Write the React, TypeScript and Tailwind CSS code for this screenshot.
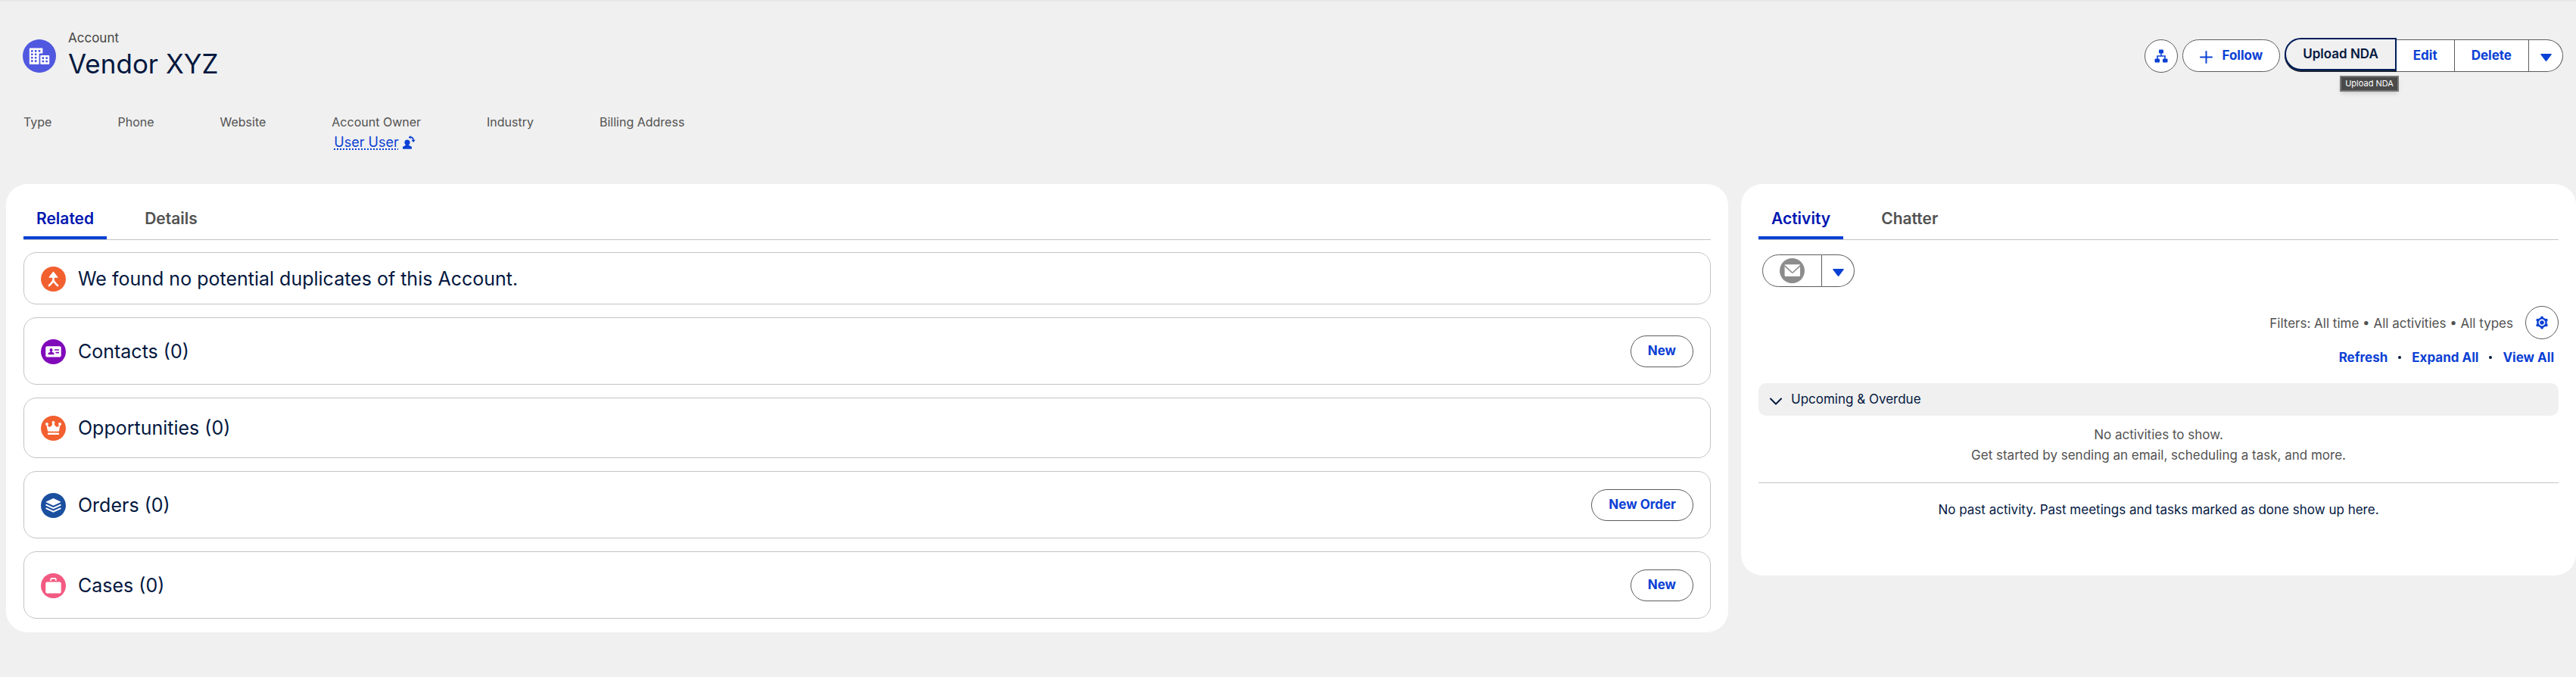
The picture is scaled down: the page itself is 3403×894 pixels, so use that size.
import { ReactNode } from 'react';

const FIELDS = ['Type', 'Phone', 'Website', 'Account Owner', 'Industry', 'Billing Address'];

export default function App() {
  return (
    <div className="min-h-screen bg-[#f0f0f0] font-['Inter',sans-serif] text-[17px] text-[#03183f]">
      <header className="border-t-2 border-[#e8e8e8] pt-9 pr-[17px] pb-[42px] pl-[30px]">
        <div className="flex items-start justify-between">
          <div className="flex items-start gap-4">
            <AccountIcon />
            <div>
              <p className="leading-6 text-[#444444]">Account</p>
              <h1 className="text-[35px] leading-[44px]">Vendor XYZ</h1>
            </div>
          </div>
          <Actions />
        </div>

        <dl className="mt-[45px] flex min-h-[50px] gap-[87px] pl-px">
          {FIELDS.map(field => (
            <div key={field}>
              <dt className="text-base leading-5 text-[#525252]">{field}</dt>
              {field === 'Account Owner' && (
                <dd className="mt-1 flex items-center gap-1 pl-[3px] text-lg leading-[26px]">
                  <a href="#owner" className="text-[#0b40d4] underline decoration-dotted decoration-2 underline-offset-2">User User</a>
                  <button aria-label="Change Owner" className="text-[#0b40d4]">
                    <ChangeOwnerIcon />
                  </button>
                </dd>
              )}
            </div>
          ))}
        </dl>
      </header>

      <main className="grid grid-cols-[2275fr_1103fr] items-start gap-[17px] pl-2">
        <section className="rounded-[28px] bg-white px-[23px] pb-[18px]">
          <Tabs tabs={['Related', 'Details']} />
          <div className="mt-4 flex flex-col gap-[17px]">
            <article className="flex items-center gap-4 rounded-[17px] border border-[#c4c4c4] px-[22px] pt-[18px] pb-4">
              <MergeIcon />
              <h2 className="text-[25px] leading-[33px]">We found no potential duplicates of this Account.</h2>
            </article>
            <RelatedList icon={<ContactIcon />} title="Contacts (0)" action="New" />
            <RelatedList icon={<OpportunityIcon />} title="Opportunities (0)" />
            <RelatedList icon={<OrderIcon />} title="Orders (0)" action="New Order" />
            <RelatedList icon={<CaseIcon />} title="Cases (0)" action="New" />
          </div>
        </section>

        <section className="rounded-[28px] bg-white px-[23px] pb-[73px]">
          <Tabs tabs={['Activity', 'Chatter']} />
          <Activity />
        </section>
      </main>
    </div>
  );
}

function Actions() {
  return (
    <div className="mt-3.5 flex items-start gap-1.5 font-bold text-[#0b40d4]">
      <button aria-label="View Account Hierarchy" className="flex size-11 items-center justify-center rounded-full border border-[#5c5c5c] bg-white">
        <HierarchyIcon />
      </button>
      <button className="flex h-[43px] items-center gap-3 rounded-full border border-[#5c5c5c] bg-white px-[22px]">
        <svg viewBox="0 0 17 17" className="mt-1 size-[17px]" fill="none" stroke="currentColor" strokeWidth="2" strokeLinecap="round">
          <path d="M8.5 1v15M1 8.5h15" />
        </svg>
        Follow
      </button>
      <div className="flex">
        <div className="relative">
          <button className="h-[43px] -translate-y-0.5 rounded-l-full border-2 border-[#001e5b] bg-[#f0f0f0] px-[22px] font-semibold text-[#03183f] shadow-[0_2px_0_#1c2433]">Upload NDA</button>
          <span role="tooltip" className="absolute top-12 left-[73px] border-2 border-[#777777] bg-[#4a4a4a] px-[5px] text-[11px] leading-[17px] font-normal whitespace-nowrap text-white shadow-md">
            Upload NDA
          </span>
        </div>
        <button className="h-[43px] border-y border-[#5c5c5c] bg-white px-[22px]">Edit</button>
        <button className="h-[43px] border border-[#5c5c5c] bg-white px-[22px]">Delete</button>
        <button aria-label="Show more actions" className="flex h-[43px] w-[45px] items-center justify-center rounded-r-full border border-l-0 border-[#5c5c5c] bg-white">
          <DownIcon />
        </button>
      </div>
    </div>
  );
}

function Tabs({ tabs }: { tabs: string[] }) {
  return (
    <div role="tablist" className="flex gap-[33px] border-b border-[#c4c4c4] pt-[18px] text-[21px] font-semibold">
      {tabs.map((tab, i) => (
        <button
          key={tab}
          role="tab"
          aria-selected={i === 0}
          className={`h-[55px] border-y-4 border-t-transparent px-[17px] ${i === 0 ? 'border-b-[#0b40d4] text-[#0017b0]' : 'border-b-transparent text-[#525252]'}`}
        >
          {tab}
        </button>
      ))}
    </div>
  );
}

function RelatedList({ icon, title, action }: { icon: ReactNode; title: string; action?: string }) {
  return (
    <article className="flex items-center gap-4 rounded-[17px] border border-[#c4c4c4] px-[22px] pt-[23px] pb-[22px]">
      {icon}
      <h2 className="flex-1 text-[25px] leading-[33px]">
        <a href="#related">{title}</a>
      </h2>
      {action && (
        <button className="h-[42px] rounded-full border border-[#5c5c5c] bg-white px-[22px] font-bold text-[#0b40d4]">{action}</button>
      )}
    </article>
  );
}

function Activity() {
  return (
    <div>
      <div className="mt-[19px] ml-[5px] flex">
        <button aria-label="Email" className="flex h-[43px] w-[79px] items-center justify-center rounded-l-full border border-[#5c5c5c]">
          <MailIcon />
        </button>
        <button aria-label="Email options" className="flex h-[43px] w-[43px] items-center justify-center rounded-r-full border border-l-0 border-[#5c5c5c] text-[#0b40d4]">
          <DownIcon />
        </button>
      </div>

      <div className="mt-[25px] flex items-center justify-end gap-4 text-[#525252]">
        <p className="pt-[3px]">Filters: All time • All activities • All types</p>
        <button aria-label="Timeline settings" className="flex size-11 items-center justify-center rounded-full border border-[#5c5c5c] text-[#0b40d4]">
          <GearIcon />
        </button>
      </div>

      <div className="mt-3 flex items-center justify-end gap-3.5 pr-1.5 leading-6 font-bold">
        <button className="text-[#0b40d4]">Refresh</button>
        <span className="size-1 rounded-full bg-[#03183f]" />
        <button className="text-[#0b40d4]">Expand All</button>
        <span className="size-1 rounded-full bg-[#03183f]" />
        <a href="#all" className="text-[#0b40d4]">View All</a>
      </div>

      <button aria-expanded="true" className="mt-[22px] flex h-[43px] w-full items-center gap-3 rounded-[10px] bg-[#f0f0f0] px-[15px]">
        <svg viewBox="0 0 16 10" className="mt-1 h-2.5 w-4" fill="none" stroke="currentColor" strokeWidth="2" strokeLinecap="round" strokeLinejoin="round">
          <path d="M1 1.5l7 7 7-7" />
        </svg>
        Upcoming &amp; Overdue
      </button>
      <div className="border-b border-[#c4c4c4] pt-3 pb-[22px] text-center leading-[27px] text-[#525252]">
        <p>No activities to show.</p>
        <p>Get started by sending an email, scheduling a task, and more.</p>
      </div>
      <p className="mt-[22px] text-center leading-[27px]">No past activity. Past meetings and tasks marked as done show up here.</p>
    </div>
  );
}

function AccountIcon() {
  const windows = [[28, 35], [39, 35], [50, 35], [28, 45], [39, 45], [28, 55], [39, 55], [28, 65], [39, 65], [61, 56], [72, 56], [61, 66], [72, 66]];
  return (
    <svg viewBox="0 0 100 100" className="mt-3.5 size-11 shrink-0">
      <circle cx="50" cy="50" r="50" fill="#5058e0" />
      <path d="M22 26h36a2 2 0 0 1 2 2v14H51a2 2 0 0 0-2 2v31H22a2 2 0 0 1-2-2V28a2 2 0 0 1 2-2z" fill="#fff" />
      <rect x="53" y="48" width="27" height="27" rx="2" fill="#fff" />
      {windows.map(([x, y]) => (
        <rect key={`${x}-${y}`} x={x - 3} y={y - 3} width="6" height="6" rx="1" fill="#5058e0" />
      ))}
    </svg>
  );
}

function MergeIcon() {
  return (
    <svg viewBox="0 0 100 100" className="size-[33px] shrink-0">
      <circle cx="50" cy="50" r="50" fill="#f26030" />
      <path d="M50 21L33 43h34z" fill="#fff" stroke="#fff" strokeWidth="3" strokeLinejoin="round" />
      <path d="M50 40v16M33 76l9-9q8-7 8-15q0 8 8 15l9 9" fill="none" stroke="#fff" strokeWidth="8" strokeLinecap="round" strokeLinejoin="round" />
    </svg>
  );
}

function ContactIcon() {
  return (
    <svg viewBox="0 0 100 100" className="size-[33px] shrink-0">
      <circle cx="50" cy="50" r="50" fill="#8009ba" />
      <rect x="19" y="28" width="62" height="43" rx="6" fill="#fff" />
      <g fill="#8009ba">
        <ellipse cx="41" cy="43" rx="6" ry="7" />
        <path d="M38 47h6v4l7 3q2 1 2 4v3H29v-3q0-3 2-4l7-3z" />
        <rect x="54" y="40" width="19" height="5" rx="2" />
        <rect x="59" y="51" width="14" height="5" rx="2" />
      </g>
    </svg>
  );
}

function OpportunityIcon() {
  return (
    <svg viewBox="0 0 100 100" className="size-[33px] shrink-0">
      <circle cx="50" cy="50" r="50" fill="#f26030" />
      <g fill="#fff">
        <circle cx="24" cy="33" r="6" />
        <circle cx="50" cy="27" r="6" />
        <circle cx="76" cy="33" r="6" />
        <path d="M22 35l5 25q1 3 3 3h40q2 0 3-3l5-25-4 2q-5 10-12 7-7-3-9-14h-6q-2 11-9 14-7 3-12-7z" />
        <rect x="27" y="68" width="46" height="8" rx="3" />
      </g>
    </svg>
  );
}

function OrderIcon() {
  return (
    <svg viewBox="0 0 100 100" className="size-[33px] shrink-0">
      <circle cx="50" cy="50" r="50" fill="#1b4f9f" />
      <path d="M50 21l29 14q2 1 0 2L50 51 21 37q-2-1 0-2z" fill="#fff" />
      <path d="M22 48l28 13 28-13M22 62l28 13 28-13" fill="none" stroke="#fff" strokeWidth="6" strokeLinecap="round" />
    </svg>
  );
}

function CaseIcon() {
  return (
    <svg viewBox="0 0 100 100" className="size-[33px] shrink-0">
      <circle cx="50" cy="50" r="50" fill="#f25a82" />
      <rect x="19" y="35" width="62" height="45" rx="6" fill="#fff" />
      <path d="M40 30v-6q0-3 3-3h14q3 0 3 3v6" fill="none" stroke="#fff" strokeWidth="5" />
    </svg>
  );
}

function MailIcon() {
  return (
    <svg viewBox="0 0 100 100" className="size-[33px]">
      <circle cx="50" cy="50" r="50" fill="#8c8c8c" />
      <rect x="20" y="25" width="62" height="48" rx="4" fill="#fff" />
      <path d="M20 30l28 26q3 3 6 0l28-26" fill="none" stroke="#8c8c8c" strokeWidth="5" />
    </svg>
  );
}

function HierarchyIcon() {
  return (
    <svg viewBox="0 0 18 18" className="size-[18px]" fill="currentColor">
      <rect x="6" y="0.5" width="6" height="5" rx="1" />
      <path d="M9 5v4M4 13V9h10v4" fill="none" stroke="currentColor" strokeWidth="1.6" />
      <rect x="0.5" y="12.5" width="6.5" height="5" rx="1" />
      <rect x="11" y="12.5" width="6.5" height="5" rx="1" />
    </svg>
  );
}

function ChangeOwnerIcon() {
  return (
    <svg viewBox="0 0 18 18" className="size-[18px]" fill="currentColor">
      <path d="M7 5.5c2.2 0 3.6 1.5 3.6 3.5 0 1.4-.6 2.4-1.3 3.1v1l2.6 1.1c.7.3 1.1.8 1.1 1.5V17q0 .8-.8.8H1.8Q1 17.8 1 17v-1.3c0-.7.4-1.2 1.1-1.5l2.6-1.1v-1C4 11.4 3.4 10.4 3.4 9 3.4 7 4.8 5.5 7 5.5z" />
      <path d="M11 2.2c2.6.1 4 1.4 4 4" fill="none" stroke="currentColor" strokeWidth="1.7" />
      <path d="M12.4 5.8h5.4L15.1 9zM11.5 0v4.6L8.6 2.3z" />
    </svg>
  );
}

function GearIcon() {
  return (
    <svg viewBox="0 0 20 20" className="size-[18px]">
      <g fill="currentColor">
        <circle cx="10" cy="10" r="7.6" />
        <rect x="8" y="0.5" width="4" height="19" rx="1.8" />
        <rect x="8" y="0.5" width="4" height="19" rx="1.8" transform="rotate(60 10 10)" />
        <rect x="8" y="0.5" width="4" height="19" rx="1.8" transform="rotate(120 10 10)" />
      </g>
      <circle cx="10" cy="10" r="4" fill="currentColor" stroke="#fff" strokeWidth="1.8" />
    </svg>
  );
}

function DownIcon() {
  return (
    <svg viewBox="0 0 15 10" className="mt-1 h-2.5 w-[15px]" fill="currentColor">
      <path d="M1 0h13q1.4 0 .5 1.2L8.3 9.4q-.8.9-1.6 0L.5 1.2Q-.4 0 1 0z" />
    </svg>
  );
}
